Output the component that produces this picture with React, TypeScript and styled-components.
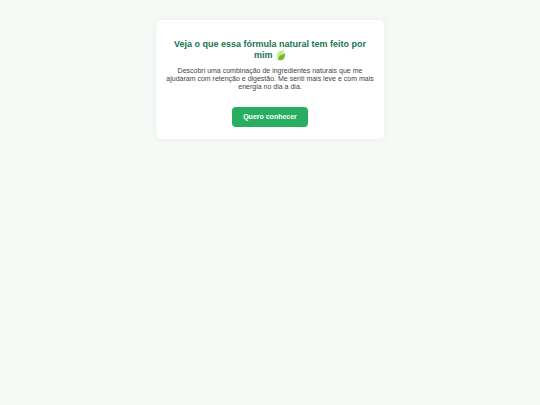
import styled, { createGlobalStyle } from "styled-components";

const App = () => {
  return (
    <>
      <GlobalStyle />
      <Page>
        <Card>
          <Title>
            Veja o que essa fórmula natural tem feito por mim <LeafIcon />
          </Title>
          <Description>
            Descobri uma combinação de ingredientes naturais que me ajudaram com
            retenção e digestão. Me senti mais leve e com mais energia no dia a
            dia.
          </Description>
          <CtaButton type="button">Quero conhecer</CtaButton>
        </Card>
      </Page>
    </>
  );
};

export default App;

const LeafIcon = () => (
  <Leaf viewBox="0 0 24 24" aria-hidden="true">
    <path
      d="M20 1C13 1 7 2 5 7c-1 4-1 7 0 10 7-1 12-5 15-16z"
      fill="#cde9a0"
    />
    <path
      d="M22 6c-2 4-10 4-13 8-2 2-3 5-2 7 6 3 12 1 14-5 1-4 1-7 1-10z"
      fill="#74b82f"
    />
    <path
      d="M19 3C15 9 9 12 5 17l-3 5"
      fill="none"
      stroke="#c6dd72"
      strokeWidth="1.5"
      strokeLinecap="round"
    />
  </Leaf>
);

const GlobalStyle = createGlobalStyle`
  * {
    box-sizing: border-box;
  }
  body {
    margin: 0;
    background-color: #f5faf6;
    font-family: "Liberation Sans", Arial, sans-serif;
  }
`;

const Page = styled.main`
  display: flex;
  justify-content: center;
  padding: 20px;
`;

const Card = styled.section`
  width: 100%;
  max-width: 228px;
  padding: 19px 9px 12px;
  background-color: #fff;
  border-radius: 5px;
  box-shadow: 0 0 8px rgba(0, 0, 0, 0.05);
  text-align: center;
`;

const Title = styled.h1`
  margin: 0 0 6px;
  font-size: 9px;
  line-height: 11px;
  color: #19744f;
`;

const Leaf = styled.svg`
  width: 11px;
  height: 11px;
  vertical-align: middle;
`;

const Description = styled.p`
  margin: 0 0 16px;
  font-size: 7px;
  line-height: 8px;
  color: #444;
`;

const CtaButton = styled.button`
  display: block;
  margin: 0 auto;
  padding: 6px 11px;
  border: none;
  border-radius: 4px;
  background-color: #27ae60;
  color: #fff;
  font-family: inherit;
  font-size: 7px;
  font-weight: bold;
  line-height: 8px;
  cursor: pointer;
`;
